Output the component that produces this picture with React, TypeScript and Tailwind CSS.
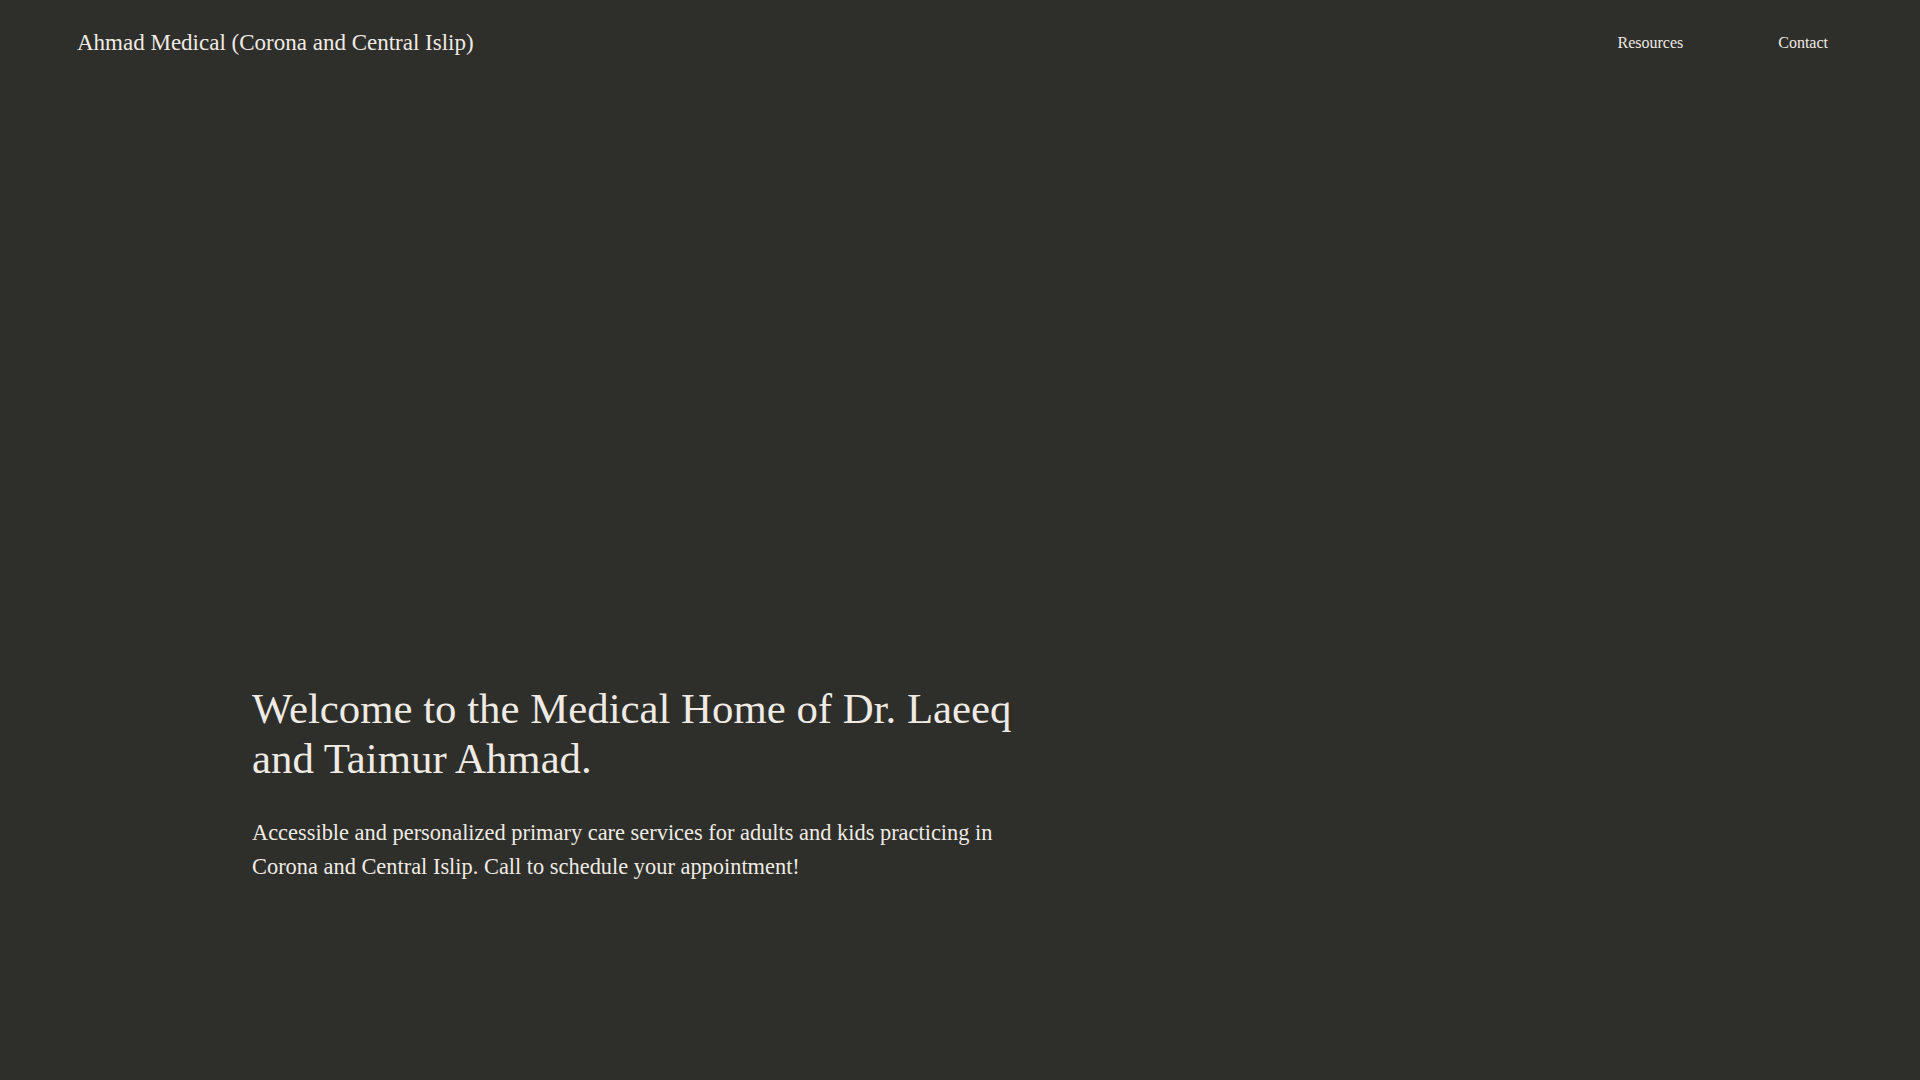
const serif = { fontFamily: '"Liberation Serif", "Times New Roman", serif' };

function Header() {
  return (
    <header className="flex h-[86px] items-center justify-between pl-[77px] pr-[92px]">
      <a className="text-[23px] text-[#efebe4]">Ahmad Medical (Corona and Central Islip)</a>
      <nav className="flex items-center gap-[95px] text-[16px] text-[#efebe4]">
        <a>Resources</a>
        <a>Contact</a>
      </nav>
    </header>
  );
}

function Hero() {
  return (
    <section className="flex h-[994px] flex-col justify-end pb-[196px] pl-[252px]">
      <div className="w-[784px]">
        <h1 className="text-[42.8px] leading-[50px] text-[#efebe4]">
          Welcome to the Medical Home of Dr. Laeeq and Taimur Ahmad.
        </h1>
        <p className="mt-8 text-[22.4px] leading-[34px] text-[#efebe4]">
          Accessible and personalized primary care services for adults and kids practicing in Corona and
          Central Islip. Call to schedule your appointment!
        </p>
      </div>
    </section>
  );
}

export default function App() {
  return (
    <div className="h-screen overflow-hidden bg-[#2e2e2a]" style={serif}>
      <Header />
      <Hero />
    </div>
  );
}
